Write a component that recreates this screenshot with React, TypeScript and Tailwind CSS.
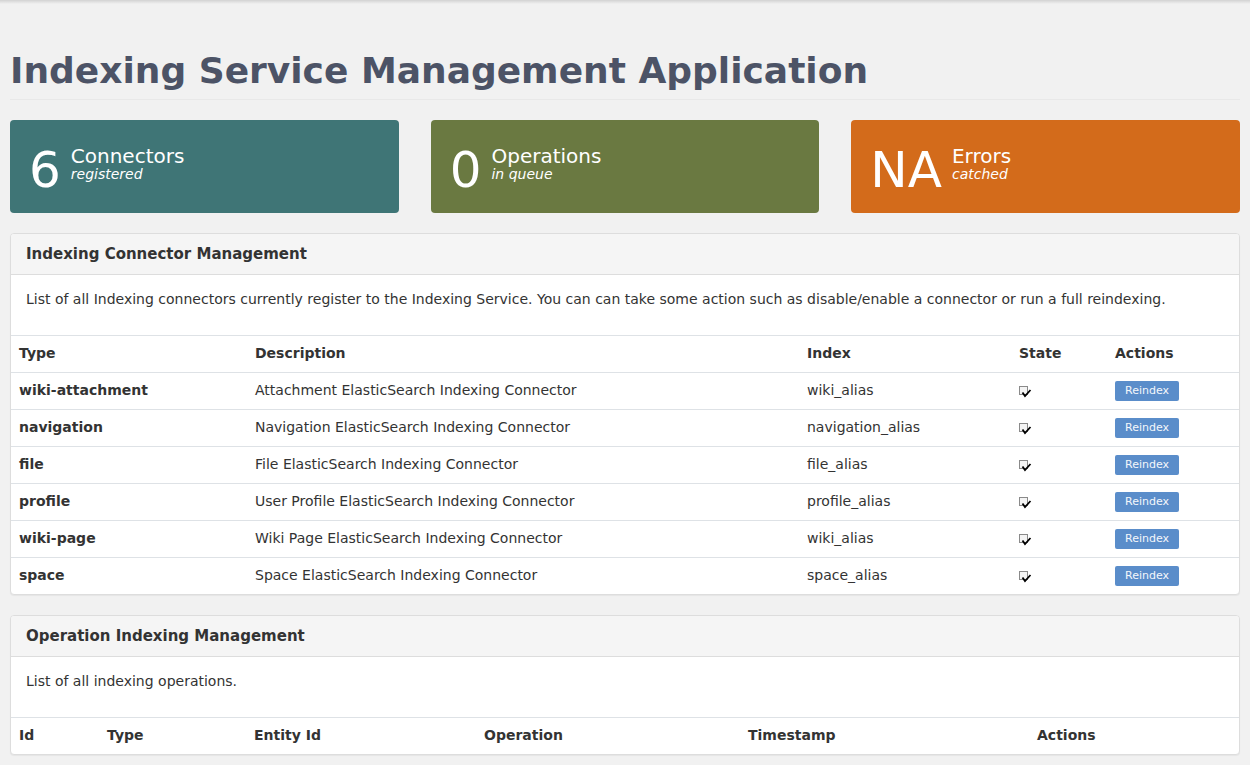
import React from "react";

const connectors = [
  { type: "wiki-attachment", desc: "Attachment ElasticSearch Indexing Connector", index: "wiki_alias" },
  { type: "navigation", desc: "Navigation ElasticSearch Indexing Connector", index: "navigation_alias" },
  { type: "file", desc: "File ElasticSearch Indexing Connector", index: "file_alias" },
  { type: "profile", desc: "User Profile ElasticSearch Indexing Connector", index: "profile_alias" },
  { type: "wiki-page", desc: "Wiki Page ElasticSearch Indexing Connector", index: "wiki_alias" },
  { type: "space", desc: "Space ElasticSearch Indexing Connector", index: "space_alias" },
];

function CheckIcon() {
  return (
    <svg width="13" height="13" viewBox="0 0 13 13" className="block mt-[5px]">
      <rect x="0.5" y="0.5" width="8" height="8" fill="#f4f4f4" stroke="#8a8a8a" strokeWidth="1" />
      <path d="M3.5 6.5 L6 10 L11.5 4" fill="none" stroke="#000" strokeWidth="1.8" />
    </svg>
  );
}

function StatCard({ value, title, sub, color }: { value: string; title: string; sub: string; color: string }) {
  return (
    <div className={`h-[93px] rounded-[4px] flex items-start pl-[19px] gap-[10px] text-white ${color}`}>
      <div className="text-[50px] leading-[50px] mt-[25px]">{value}</div>
      <div className="mt-[26px] flex flex-col">
        <span className="text-[20px] leading-[20px]">{title}</span>
        <span className="text-[14px] leading-[14px] mt-[1px] italic">{sub}</span>
      </div>
    </div>
  );
}

function Panel({ title, text, children }: { title: string; text: string; children: React.ReactNode }) {
  return (
    <div className="bg-white border border-[#dddddd] rounded-[4px] shadow-[0_1px_1px_rgba(0,0,0,0.05)] overflow-hidden">
      <div className="bg-[#f5f5f5] border-b border-[#dddddd] px-[15px] py-[10px] text-[15px] leading-[20px] font-bold text-[#333]">
        {title}
      </div>
      <div className="px-[15px] pt-[14px] pb-[26px] text-[14px] leading-[20px] text-[#333]">{text}</div>
      {children}
    </div>
  );
}

const th = "text-left font-bold px-[8px] pt-[7px] pb-[9px]";
const td = "px-[8px] pt-[7px] pb-[9px]";

export default function App() {
  return (
    <div
      className="min-h-screen bg-[#f1f1f1] text-[#333] flow-root"
      style={{ fontFamily: '"DejaVu Sans", Verdana, sans-serif' }}
    >
      <div className="h-[4px] w-full bg-gradient-to-b from-[rgba(0,0,0,0.13)] to-[rgba(0,0,0,0)]" />
      <div className="px-[10px] pt-[47px] pb-[40px]">
        <div className="pb-[9px] border-b border-[#e8e8e8]">
          <h1 className="text-[36px] leading-[39px] font-bold text-[#4c5366]">
            Indexing Service Management Application
          </h1>
        </div>

        <div className="grid grid-cols-3 gap-[32px] mt-[20px]">
          <StatCard value="6" title="Connectors" sub="registered" color="bg-[#3f7576]" />
          <StatCard value="0" title="Operations" sub="in queue" color="bg-[#6a7941]" />
          <StatCard value="NA" title="Errors" sub="catched" color="bg-[#d36b1b]" />
        </div>

        <div className="mt-[20px]">
          <Panel
            title="Indexing Connector Management"
            text="List of all Indexing connectors currently register to the Indexing Service. You can can take some action such as disable/enable a connector or run a full reindexing."
          >
            <table className="w-full table-fixed border-collapse text-[14px] leading-[20px] text-[#333]">
              <colgroup>
                <col className="w-[236px]" />
                <col className="w-[552px]" />
                <col className="w-[212px]" />
                <col className="w-[96px]" />
                <col className="w-[132px]" />
              </colgroup>
              <thead>
                <tr className="border-t border-[#dee2e6]">
                  <th className={th}>Type</th>
                  <th className={th}>Description</th>
                  <th className={th}>Index</th>
                  <th className={th}>State</th>
                  <th className={th}>Actions</th>
                </tr>
              </thead>
              <tbody>
                {connectors.map((c) => (
                  <tr key={c.type} className="border-t border-[#dee2e6]">
                    <td className={`${td} font-bold`}>{c.type}</td>
                    <td className={td}>{c.desc}</td>
                    <td className={td}>{c.index}</td>
                    <td className={td}>
                      <CheckIcon />
                    </td>
                    <td className="px-[8px] py-[8px]">
                      <button className="w-[64px] h-[20px] rounded-[2px] bg-[#5a8dca] text-[#f4f7fb] text-[11px] leading-[20px] text-center block">
                        Reindex
                      </button>
                    </td>
                  </tr>
                ))}
              </tbody>
            </table>
          </Panel>
        </div>

        <div className="mt-[20px]">
          <Panel title="Operation Indexing Management" text="List of all indexing operations.">
            <table className="w-full table-fixed border-collapse text-[14px] leading-[20px] text-[#333]">
              <colgroup>
                <col className="w-[88px]" />
                <col className="w-[147px]" />
                <col className="w-[230px]" />
                <col className="w-[264px]" />
                <col className="w-[289px]" />
                <col className="w-[210px]" />
              </colgroup>
              <thead>
                <tr className="border-t border-[#dee2e6]">
                  <th className={th}>Id</th>
                  <th className={th}>Type</th>
                  <th className={th}>Entity Id</th>
                  <th className={th}>Operation</th>
                  <th className={th}>Timestamp</th>
                  <th className={th}>Actions</th>
                </tr>
              </thead>
              <tbody />
            </table>
          </Panel>
        </div>
      </div>
    </div>
  );
}
